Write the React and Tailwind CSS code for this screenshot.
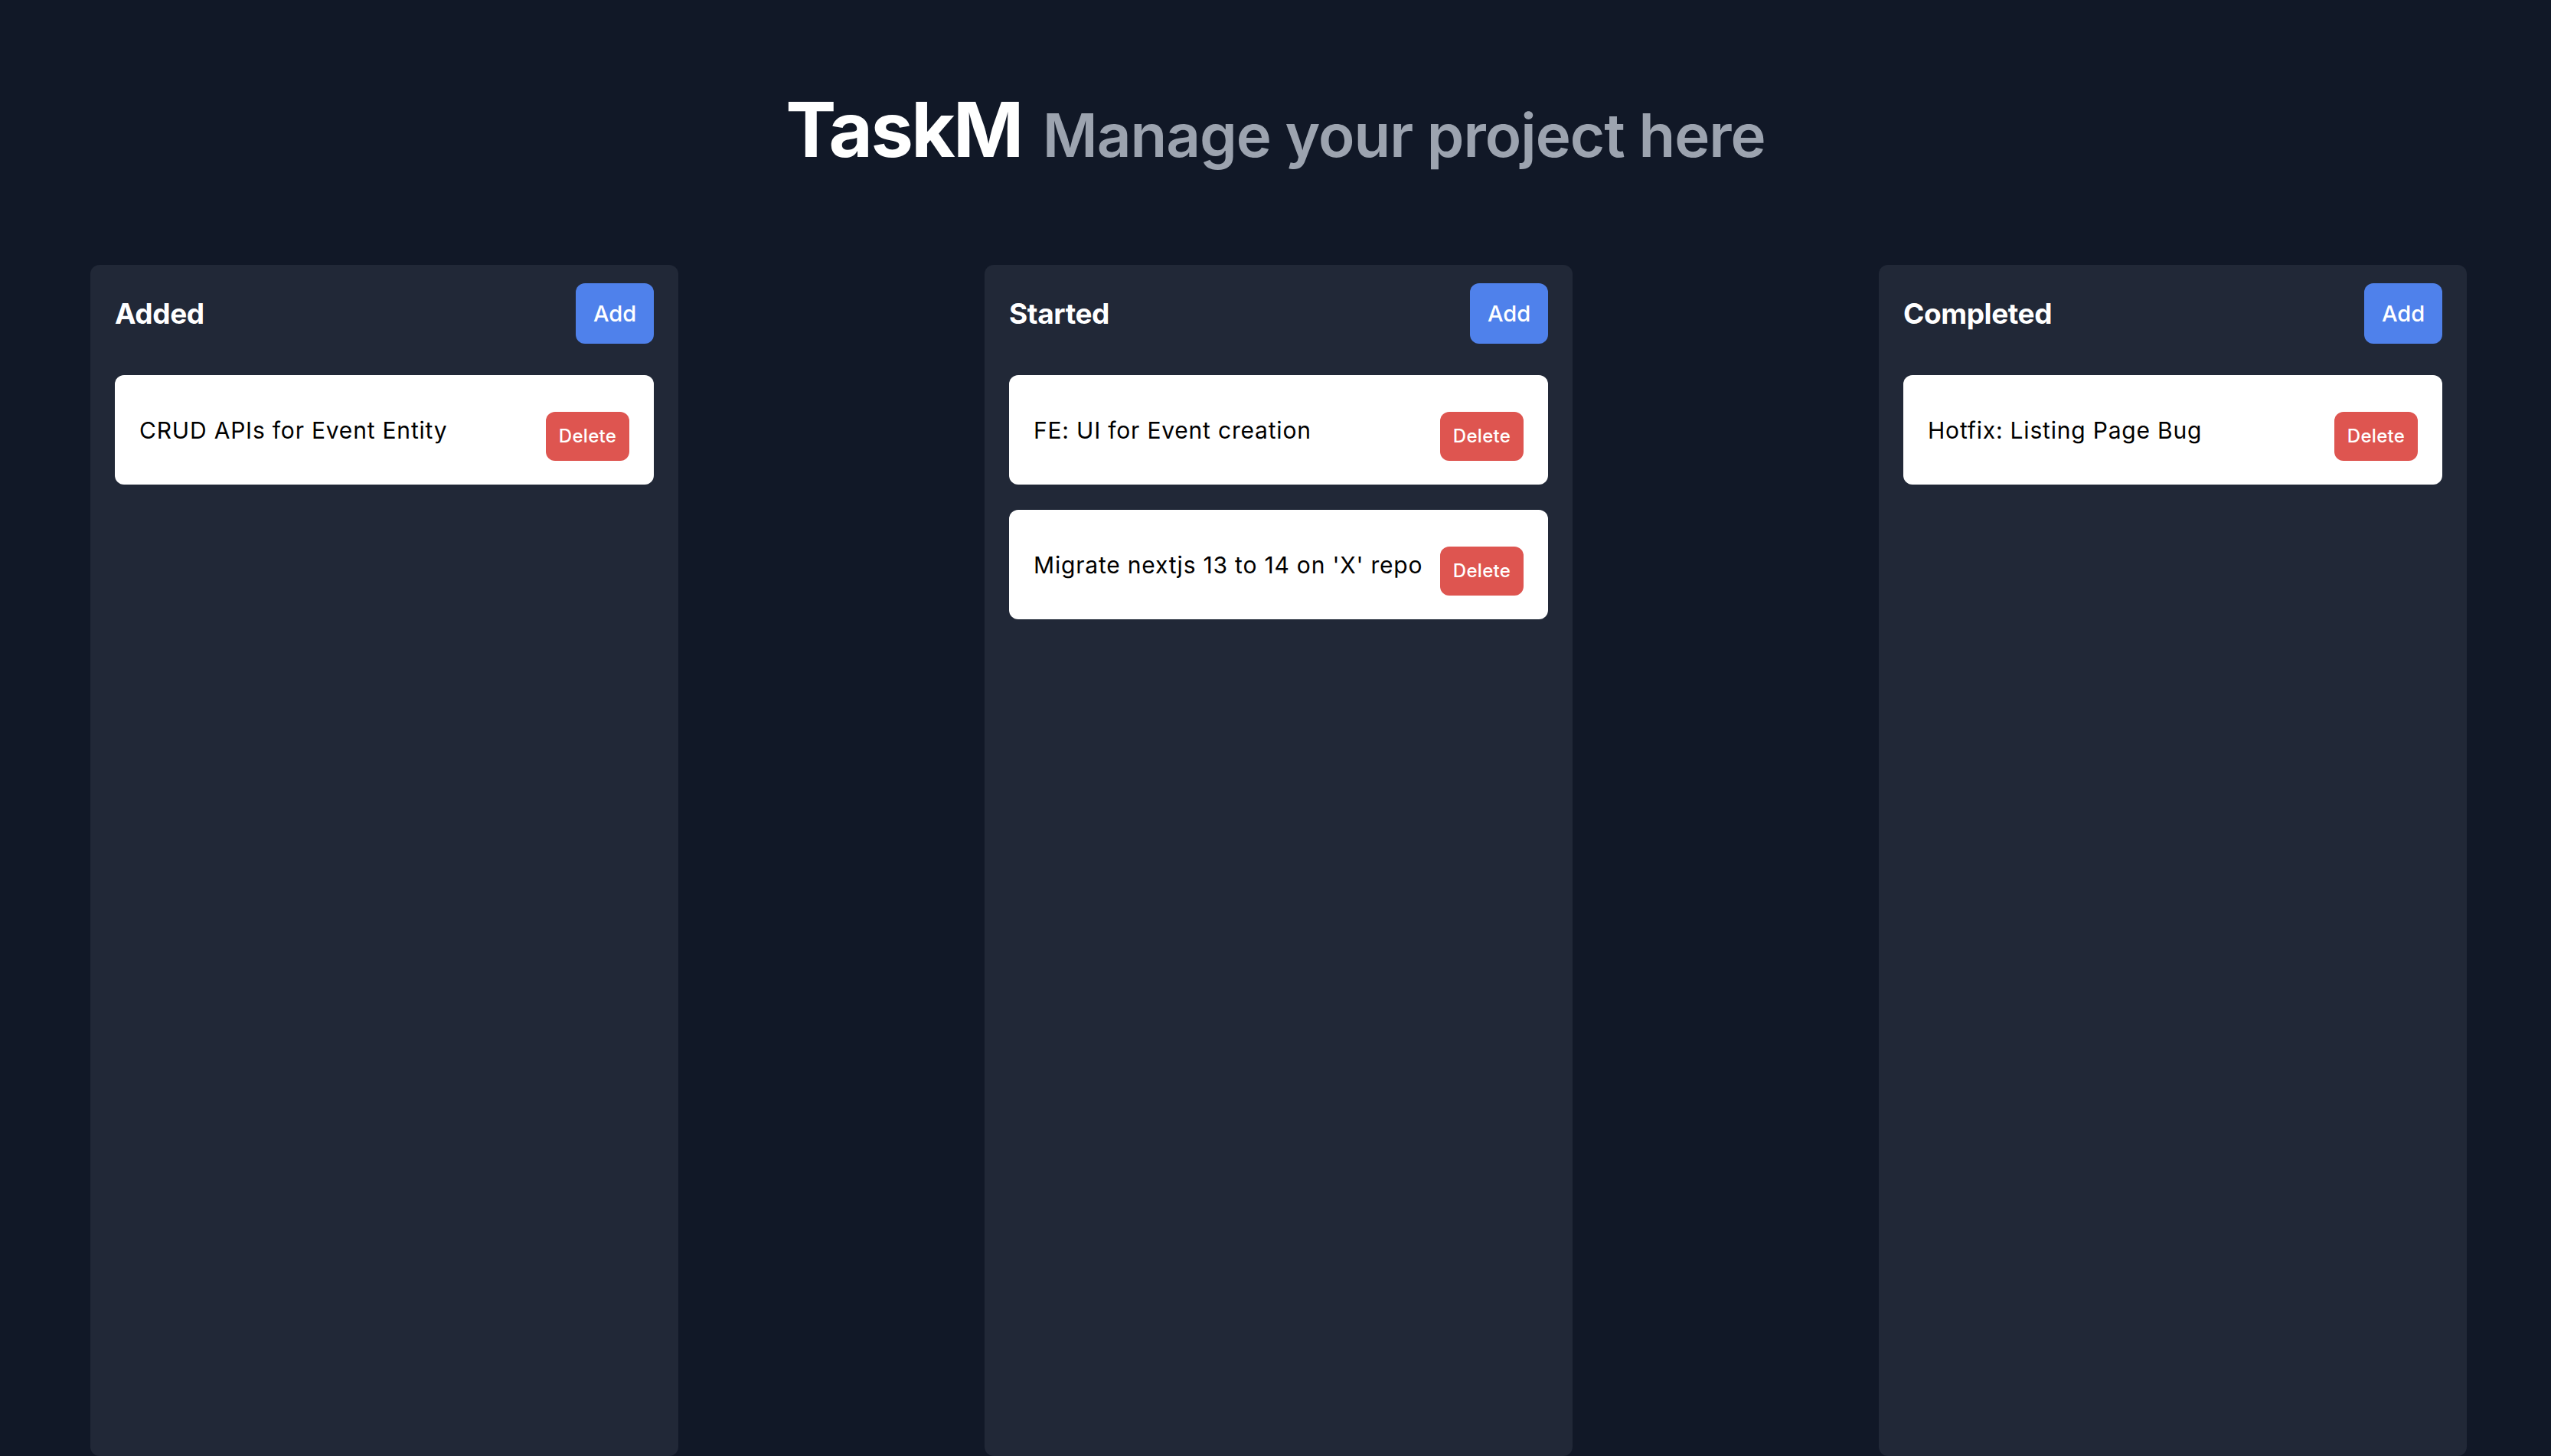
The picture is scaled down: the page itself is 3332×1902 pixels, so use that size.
import React from "react";

const columns = [
  { title: "Added", tasks: ["CRUD APIs for Event Entity"] },
  { title: "Started", tasks: ["FE: UI for Event creation", "Migrate nextjs 13 to 14 on 'X' repo"] },
  { title: "Completed", tasks: ["Hotfix: Listing Page Bug"] },
];

function Card({ text }) {
  return (
    <div className="flex h-[143px] items-center justify-between gap-[16px] rounded-[12px] bg-white px-[32px]">
      <p className="whitespace-nowrap text-[30px] leading-[42px] tracking-[0.8px] text-black">{text}</p>
      <button className="mt-[17px] h-[64px] w-[109px] shrink-0 rounded-[12px] bg-[#de5550] text-[24px] font-medium tracking-[0.3px] text-white">
        Delete
      </button>
    </div>
  );
}

function Column({ title, tasks }) {
  return (
    <div className="h-[1556px] w-[768px] rounded-[12px] bg-[#212837] px-[32px] pt-[24px]">
      <div className="flex h-[79px] items-center justify-between">
        <h2 className="text-[37px] font-bold leading-none tracking-[-0.4px] text-white">{title}</h2>
        <button className="h-[79px] w-[102px] rounded-[12px] bg-[#4f81eb] text-[29px] font-medium text-white">
          Add
        </button>
      </div>
      <div className="mt-[41px] flex flex-col gap-[33px]">
        {tasks.map((t) => (
          <Card key={t} text={t} />
        ))}
      </div>
    </div>
  );
}

export default function App() {
  return (
    <div className="h-[1902px] overflow-hidden bg-[#111827] pt-[119px] font-['Inter',sans-serif]">
      <div className="flex h-[100px] items-baseline justify-center gap-[27px]">
        <h1 className="text-[99px] font-bold leading-[100px] tracking-[-2.6px] text-white">TaskM</h1>
        <span className="text-[78px] font-semibold leading-[100px] tracking-[-1px] text-[#9ca3af]">Manage your project here</span>
      </div>
      <div className="mt-[127px] flex gap-[400px] pl-[118px]">
        {columns.map((c) => (
          <Column key={c.title} {...c} />
        ))}
      </div>
    </div>
  );
}
